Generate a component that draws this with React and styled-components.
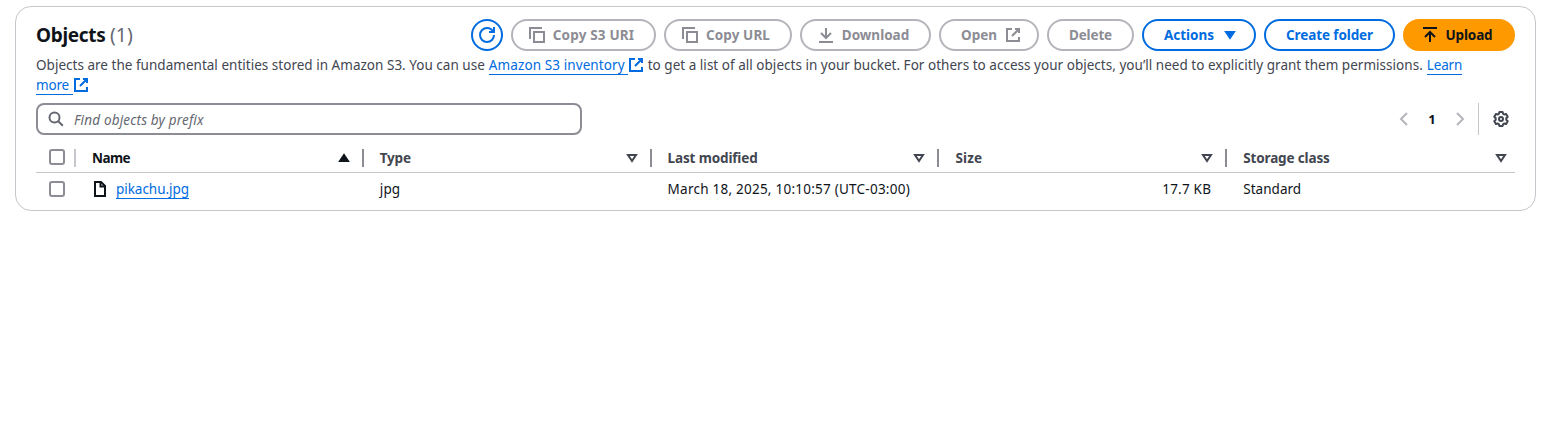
import React from "react";
import styled, { createGlobalStyle } from "styled-components";

const color = {
  ink: "#0f141a",
  body: "#424650",
  muted: "#656871",
  disabled: "#8c8c94",
  disabledBorder: "#b4b4bb",
  line: "#c6c6cd",
  control: "#8c8c94",
  blue: "#006ce0",
  orange: "#ff9900",
};

const GlobalStyle = createGlobalStyle`
  * { box-sizing: border-box; }
  body {
    margin: 0;
    background: #fff;
    color: ${color.ink};
    font: 13.5px/20px "Noto Sans", "Open Sans", sans-serif;
  }
`;

const Page = styled.main`
  padding: 6px 15px;
`;

const Panel = styled.section`
  height: 205px;
  border: 1px solid ${color.line};
  border-radius: 16px;
  padding: 12px 20px 0;
`;

const Header = styled.header`
  display: flex;
  justify-content: space-between;
  align-items: center;
  height: 32px;
`;

const Title = styled.h2`
  margin: 0;
  font-size: 19px;
  line-height: 24px;
  font-weight: 700;
  letter-spacing: -0.32px;
`;

const Counter = styled.span`
  color: ${color.muted};
  font-size: 19.5px;
  font-weight: 400;
  letter-spacing: 0;
`;

const Actions = styled.div`
  display: flex;
  gap: 8px;
`;

const variants = {
  normal: `color: ${color.blue}; border-color: ${color.blue};`,
  disabled: `color: ${color.disabled}; border-color: ${color.disabledBorder};`,
  primary: `color: ${color.ink}; background: ${color.orange}; border-color: ${color.orange};`,
};

const Button = styled.button`
  display: flex;
  align-items: center;
  justify-content: center;
  gap: 8px;
  width: ${(p) => p.$width}px;
  height: 32px;
  padding: 0;
  border: 2px solid;
  border-radius: 20px;
  background: #fff;
  font: 700 13.5px/20px "Noto Sans", "Open Sans", sans-serif;
  letter-spacing: ${(p) => p.$track || 0}px;
  white-space: nowrap;
  ${(p) => variants[p.$variant || "normal"]}
`;

const ButtonContent = styled.span`
  display: flex;
  align-items: center;
  gap: 8px;
  margin-left: ${(p) => (p.$lead ? -4 : 0)}px;
  margin-right: ${(p) => (p.$trail ? -4 : 0)}px;
`;

const Svg = styled.svg`
  display: block;
  flex: none;
  width: 16px;
  height: 16px;
  fill: none;
  stroke: currentColor;
  stroke-width: 2;
`;

const Description = styled.div`
  margin-top: 4px;
  color: ${color.body};
`;

const Line = styled.div`
  display: flex;
  height: 20px;
  white-space: pre;
`;

const Phrase = styled.span`
  letter-spacing: ${(p) => p.$track || 0}px;
  margin-right: 4px;
`;

const Link = styled.a`
  display: flex;
  color: ${color.blue};
  margin-right: ${(p) => p.$gap || 0}px;
  svg { margin-top: 2px; }
`;

const LinkText = styled.span`
  height: 20px;
  border-bottom: 1px solid;
  padding-right: ${(p) => p.$pad || 0}px;
  letter-spacing: ${(p) => p.$track || 0}px;
`;

const Tools = styled.div`
  display: flex;
  justify-content: space-between;
  margin-top: 8px;
`;

const Search = styled.label`
  display: flex;
  align-items: center;
  gap: 10px;
  width: 546px;
  height: 32px;
  padding: 0 10px;
  border: 2px solid ${color.control};
  border-radius: 8px;
  color: ${color.muted};
`;

const Placeholder = styled.span`
  padding-top: 2px;
  font-style: italic;
  letter-spacing: 0.17px;
`;

const Pager = styled.div`
  display: flex;
  align-items: center;
  height: 32px;
  color: ${color.disabledBorder};
`;

const PageNumber = styled.span`
  width: 40px;
  text-align: center;
  color: ${color.ink};
  font-size: 13px;
  font-weight: 700;
`;

const Settings = styled.div`
  display: flex;
  align-items: center;
  height: 32px;
  margin-left: 10px;
  padding: 0 6px 0 14px;
  border-left: 1px solid ${color.line};
  color: ${color.body};
`;

const Grid = styled.div`
  display: grid;
  grid-template-columns: 40px repeat(5, 1fr);
`;

const HeadRow = styled(Grid)`
  height: 38px;
  padding-top: 14px;
  border-bottom: 1px solid ${color.line};
`;

const HeadCell = styled.div`
  display: flex;
  justify-content: space-between;
  align-items: center;
  height: 18px;
  padding: 0 ${(p) => (p.$last ? 6 : 10)}px 0 16px;
  border-right: ${(p) => (p.$last ? "0" : `2px solid ${color.control}`)};
  color: ${(p) => (p.$active ? color.ink : color.body)};
  font-weight: 700;
  letter-spacing: ${(p) => p.$track}px;
`;

const SelectAll = styled.div`
  height: 18px;
  padding-left: 13px;
  border-right: 2px solid ${color.line};
`;

const SelectCell = styled.div`
  padding-left: 13px;
`;

const Checkbox = styled.span`
  display: block;
  width: 16px;
  height: 16px;
  border: 2px solid ${color.control};
  border-radius: 3px;
`;

const Row = styled(Grid)`
  padding-top: 8px;
  line-height: 16px;
`;

const Cell = styled.div`
  display: flex;
  gap: 8px;
  height: 18px;
  padding: 0 16px;
  justify-content: ${(p) => (p.$right ? "flex-end" : "flex-start")};
  letter-spacing: ${(p) => p.$track || 0}px;
  white-space: nowrap;
`;

const FileLink = styled.a`
  height: 18px;
  color: ${color.blue};
  border-bottom: 1px solid;
`;

const glyphs = {
  refresh: (
    <>
      <path d="M15 8c0 3.87-3.13 7-7 7s-7-3.13-7-7 3.13-7 7-7c2.79 0 5.2 1.63 6.33 4" />
      <path d="M10 5h5V0" />
    </>
  ),
  copy: (
    <>
      <path d="M15 5H5v10h10V5Z" />
      <path d="M13 1H1v11" />
    </>
  ),
  download: <path d="M1 15h14M8 1v10M3 6l5 5 5-5" />,
  upload: <path d="M1 1h14M8 15V6M3 10l5-5 5 5" />,
  external: (
    <>
      <path d="M10 2h4v4M7 9l7-7" />
      <path d="M14 10v4H2V2h5" />
    </>
  ),
  caret: <path d="M4 5h8l-4 6-4-6Z" fill="currentColor" />,
  sortUp: <path d="M4 11h8L8 5l-4 6Z" fill="currentColor" />,
  sort: <path d="M4 5h8l-4 6-4-6Z" />,
  search: (
    <>
      <circle cx="6.5" cy="6.5" r="5" />
      <path d="m10.2 10.2 4.6 4.6" />
    </>
  ),
  left: <path d="M11 2 5 8l6 6" />,
  right: <path d="m5 2 6 6-6 6" />,
  file: (
    <>
      <path d="M3 1h6l4 4v10H3V1Z" />
      <path d="M8.5 1v4.5H13" />
    </>
  ),
  gear: (
    <>
      <circle cx="8" cy="8" r="2" />
      <path d="M6.4 1h3.2l.6 2 .9.5 2-.5 1.6 2.8-1.4 1.5v1.400l1.400 1.500-1.600 2.800-2-.5-.9.5-.6 2H6.400l-.6-2-.9-.5-2 .5-1.600-2.800L2.700 8.700V7.300L1.300 5.800 2.900 3l2 .5.9-.5.6-2Z" />
    </>
  ),
};

const Icon = ({ name }) => (
  <Svg viewBox="0 0 16 16" aria-hidden="true" strokeLinejoin={name === "gear" ? "round" : "miter"}>
    {glyphs[name]}
  </Svg>
);

const buttons = [
  { label: "Copy S3 URI", icon: "copy", width: 145, track: 0.17, variant: "disabled" },
  { label: "Copy URL", icon: "copy", width: 128, track: 0.1, variant: "disabled" },
  { label: "Download", icon: "download", width: 131, track: 0, variant: "disabled" },
  { label: "Open", after: "external", width: 100, track: 0, variant: "disabled" },
  { label: "Delete", width: 87, track: -0.16, variant: "disabled" },
  { label: "Actions", after: "caret", width: 114, track: -0.02 },
  { label: "Create folder", width: 131, track: -0.1 },
  { label: "Upload", icon: "upload", width: 112, track: -0.14, variant: "primary" },
];

const columns = [
  { label: "Name", icon: "sortUp", track: -0.57 },
  { label: "Type", icon: "sort", track: -0.2 },
  { label: "Last modified", icon: "sort", track: -0.14 },
  { label: "Size", icon: "sort", track: 0.2 },
  { label: "Storage class", icon: "sort", track: -0.14 },
];

export default function App() {
  return (
    <Page>
      <GlobalStyle />
      <Panel>
        <Header>
          <Title>
            Objects <Counter>(1)</Counter>
          </Title>
          <Actions>
            <Button $width={32} aria-label="Refresh">
              <Icon name="refresh" />
            </Button>
            {buttons.map((b) => (
              <Button key={b.label} $width={b.width} $track={b.track} $variant={b.variant}>
                <ButtonContent $lead={b.icon} $trail={b.after}>
                  {b.icon && <Icon name={b.icon} />}
                  {b.label}
                  {b.after && <Icon name={b.after} />}
                </ButtonContent>
              </Button>
            ))}
          </Actions>
        </Header>
        <Description>
          <Line>
            <Phrase $track={0.02}>
              Objects are the fundamental entities stored in Amazon S3. You can use
            </Phrase>
            <Link $gap={4}>
              <LinkText $track={0.1} $pad={3}>Amazon S3 inventory</LinkText>
              <Icon name="external" />
            </Link>
            <Phrase $track={0.025}>
              to get a list of all objects in your bucket. For others to access your objects, you’ll need to
              explicitly grant them permissions.
            </Phrase>
            <Link>
              <LinkText $track={-0.14}>Learn</LinkText>
            </Link>
          </Line>
          <Line>
            <Link>
              <LinkText $track={-0.18} $pad={4}>more</LinkText>
              <Icon name="external" />
            </Link>
          </Line>
        </Description>
        <Tools>
          <Search>
            <Icon name="search" />
            <Placeholder>Find objects by prefix</Placeholder>
          </Search>
          <Pager>
            <Icon name="left" />
            <PageNumber>1</PageNumber>
            <Icon name="right" />
            <Settings>
              <Icon name="gear" />
            </Settings>
          </Pager>
        </Tools>
        <HeadRow>
          <SelectAll>
            <Checkbox />
          </SelectAll>
          {columns.map((c, i) => (
            <HeadCell key={c.label} $track={c.track} $active={i === 0} $last={i === 4}>
              {c.label}
              <Icon name={c.icon} />
            </HeadCell>
          ))}
        </HeadRow>
        <Row>
          <SelectCell>
            <Checkbox />
          </SelectCell>
          <Cell $track={-0.04}>
            <Icon name="file" />
            <FileLink>pikachu.jpg</FileLink>
          </Cell>
          <Cell $track={0.1}>jpg</Cell>
          <Cell $track={0.24}>March 18, 2025, 10:10:57 (UTC-03:00)</Cell>
          <Cell $track={0.22} $right>17.7 KB</Cell>
          <Cell $track={0.04}>Standard</Cell>
        </Row>
      </Panel>
    </Page>
  );
}
